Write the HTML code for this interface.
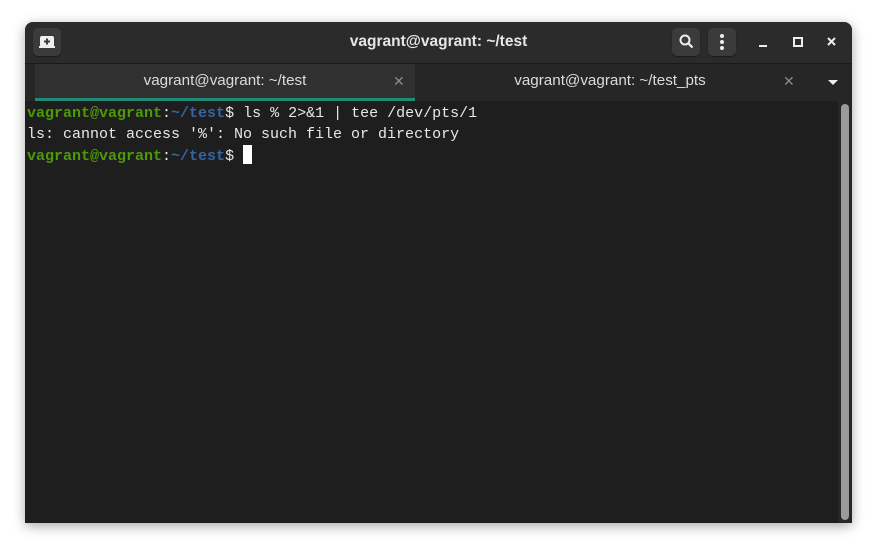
<!DOCTYPE html>
<html><head><style>
body{margin:0;width:878px;height:552px;background:#fff;overflow:hidden;position:relative;font-family:"Liberation Sans",sans-serif}
.win{position:absolute;left:25px;top:22px;width:827px;height:501px;background:#1e1e1e;border-radius:8px 8px 0 0;box-shadow:0 3px 12px rgba(0,0,0,.35);overflow:hidden}
.hdr{position:absolute;left:0;top:0;width:827px;height:41px;background:#2b2b2b;border-bottom:1px solid #1a1a1a}
.title{position:absolute;left:0;right:0;top:11px;text-align:center;color:#e6e6e6;font-weight:bold;font-size:15.5px}
.btn{position:absolute;top:6px;width:28px;height:28px;border-radius:5px;background:#3b3b3b;box-shadow:0 1px 1px rgba(0,0,0,.4)}
.tabs{position:absolute;left:0;top:42px;width:827px;height:37px;background:#262626}
.tab{position:absolute;top:0;height:37px;color:#dcdcdc;font-size:15.2px;text-align:center;line-height:34px}
.x{position:absolute;color:#8a8a8a;font-size:14px;top:0}
.term{position:absolute;left:2px;top:81px;font-family:"Liberation Mono",monospace;font-size:15px;line-height:21px;color:#e8e8e8;white-space:pre}
.g{color:#4e9a06;font-weight:bold}.b{color:#3465a4;font-weight:bold}
</style></head><body>
<div class="win">
 <div class="hdr">
  <div class="btn" style="left:8px"><svg width="28" height="28"><rect x="7" y="8" width="14" height="11" rx="2" fill="#eee"/><rect x="6" y="18" width="16" height="2" fill="#eee"/><path d="M14 10.5v6M11 13.5h6" stroke="#3b3b3b" stroke-width="2"/></svg></div>
  <div class="title">vagrant@vagrant: ~/test</div>
  <div class="btn" style="left:647px"><svg width="28" height="28"><circle cx="13" cy="12" r="4.5" stroke="#eee" stroke-width="2" fill="none"/><path d="M16 15l4.5 4.5" stroke="#eee" stroke-width="2.2"/></svg></div>
  <div class="btn" style="left:683px"><svg width="28" height="28"><circle cx="14" cy="8" r="2" fill="#eee"/><circle cx="14" cy="14" r="2" fill="#eee"/><circle cx="14" cy="20" r="2" fill="#eee"/></svg></div>
  <svg style="position:absolute;left:730px;top:12px" width="90" height="18"><rect x="4" y="11" width="8" height="2" fill="#eee"/><rect x="39" y="4" width="8" height="8" stroke="#eee" stroke-width="2" fill="none"/><path d="M73 4l7 7M80 4l-7 7" stroke="#eee" stroke-width="2"/></svg>
 </div>
 <div class="tabs">
  <div class="tab" style="left:10px;width:380px;background:#303030">vagrant@vagrant: ~/test<span class="x" style="left:358px">✕</span><div style="position:absolute;left:0;bottom:0;width:380px;height:3px;background:#1f8a76"></div></div>
  <div class="tab" style="left:390px;width:390px">vagrant@vagrant: ~/test_pts<span class="x" style="left:368px">✕</span></div>
  <svg style="position:absolute;left:802px;top:15px" width="12" height="8"><path d="M1 1h10l-5 5z" fill="#eee"/></svg>
 </div>
 <div class="term"><span class="g">vagrant@vagrant</span>:<span class="b">~/test</span>$ ls % 2&gt;&amp;1 | tee /dev/pts/1
ls: cannot access '%': No such file or directory
<span class="g">vagrant@vagrant</span>:<span class="b">~/test</span>$ <span style="background:#fff;display:inline-block;width:9px;height:19px;vertical-align:-4px"></span></div>
 <div style="position:absolute;left:813px;top:79px;width:14px;height:422px;background:#262626"></div>
 <div style="position:absolute;left:816px;top:82px;width:8px;height:416px;background:#9a9a9a;border-radius:4px"></div>
</div>
</body></html>
